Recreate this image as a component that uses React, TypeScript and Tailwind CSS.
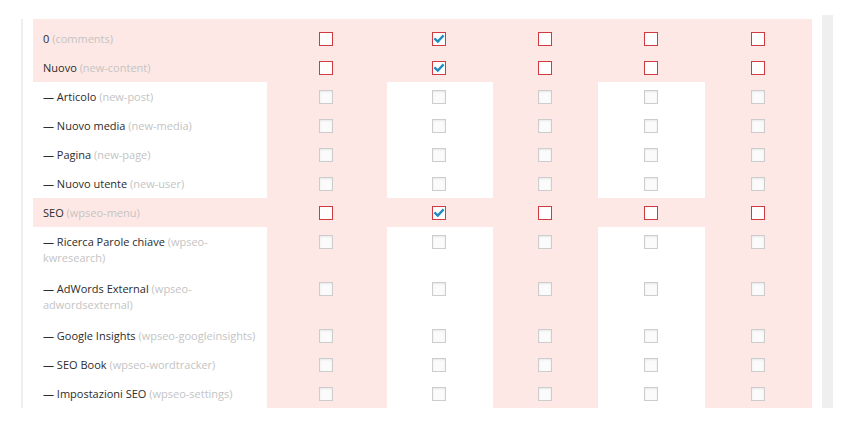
import React from 'react';

type Row = {
  label: string;
  slug: string;
  slug2?: string;
  parent?: boolean;
  first?: boolean;
};

const rows: Row[] = [
  { label: '0', slug: '(comments)', parent: true, first: true },
  { label: 'Nuovo', slug: '(new-content)', parent: true },
  { label: '— Articolo', slug: '(new-post)' },
  { label: '— Nuovo media', slug: '(new-media)' },
  { label: '— Pagina', slug: '(new-page)' },
  { label: '— Nuovo utente', slug: '(new-user)' },
  { label: 'SEO', slug: '(wpseo-menu)', parent: true },
  { label: '— Ricerca Parole chiave', slug: '(wpseo-', slug2: 'kwresearch)' },
  { label: '— AdWords External', slug: '(wpseo-', slug2: 'adwordsexternal)' },
  { label: '— Google Insights', slug: '(wpseo-googleinsights)' },
  { label: '— SEO Book', slug: '(wpseo-wordtracker)' },
  { label: '— Impostazioni SEO', slug: '(wpseo-settings)' },
];

function Box({ red, checked }: { red?: boolean; checked?: boolean }) {
  return (
    <span
      className={
        red
          ? 'mx-auto block w-[14px] h-[14px] border border-[#cf3b3f] bg-white relative'
          : 'mx-auto block w-[14px] h-[14px] border border-[#cdcdcd] bg-[#fbfbfb] shadow-[inset_0_1px_2px_rgba(0,0,0,0.08)] relative'
      }
    >
      {checked && (
        <svg viewBox="0 0 14 14" className="absolute left-[-1px] top-[-1px] w-[14px] h-[14px]">
          <path d="M3.2 7.2 L5.8 9.6 L10.8 4.2" fill="none" stroke="#1e8cbe" strokeWidth="2.3" strokeLinecap="square" />
        </svg>
      )}
    </span>
  );
}

export default function App() {
  return (
    <div className="w-[854px] h-[429px] bg-white overflow-hidden font-['Open_Sans',sans-serif] flex pt-[19px]">
      <div className="w-[21px] shrink-0" />
      <div className="w-[2px] h-[389px] bg-[#eeeeee] shrink-0" />
      <div className="w-[10px] shrink-0" />
      <table className="table-fixed border-collapse w-[779px] h-fit shrink-0 text-[11px] leading-[16px]">
        <colgroup>
          <col className="w-[234px]" />
          <col className="w-[120px]" />
          <col className="w-[106px]" />
          <col className="w-[105px]" />
          <col className="w-[107px]" />
          <col className="w-[107px]" />
        </colgroup>
        <tbody>
          {rows.map((r, i) => {
            const pt = r.first ? 'pt-[12px]' : 'pt-[7px]';
            const cbPt = r.first ? 'pt-[13px]' : 'pt-[8px]';
            const pb = r.slug2 ? 'pb-[8px]' : 'pb-[6px]';
            return (
              <tr key={i}>
                <td className={`${r.parent ? 'bg-[#fde8e5]' : 'bg-white'} align-top pl-[10px] pr-[10px] ${pt} ${pb} text-[#2c2c2c]`}>
                  {r.label} <span className="text-[#c4c4c4]">{r.slug}</span>
                  {r.slug2 && (
                    <>
                      <br />
                      <span className="text-[#c4c4c4]">{r.slug2}</span>
                    </>
                  )}
                </td>
                {[0, 1, 2, 3, 4].map((c) => (
                  <td
                    key={c}
                    className={`${r.parent || c % 2 === 0 ? 'bg-[#fde8e5]' : 'bg-white'} align-top ${cbPt} pr-[2px]`}
                  >
                    <Box red={r.parent} checked={r.parent && c === 1} />
                  </td>
                ))}
              </tr>
            );
          })}
        </tbody>
      </table>
      <div className="w-[10px] shrink-0" />
      <div className="w-[11px] h-[393px] -mt-[4px] bg-[#efefef] shrink-0" />
    </div>
  );
}
